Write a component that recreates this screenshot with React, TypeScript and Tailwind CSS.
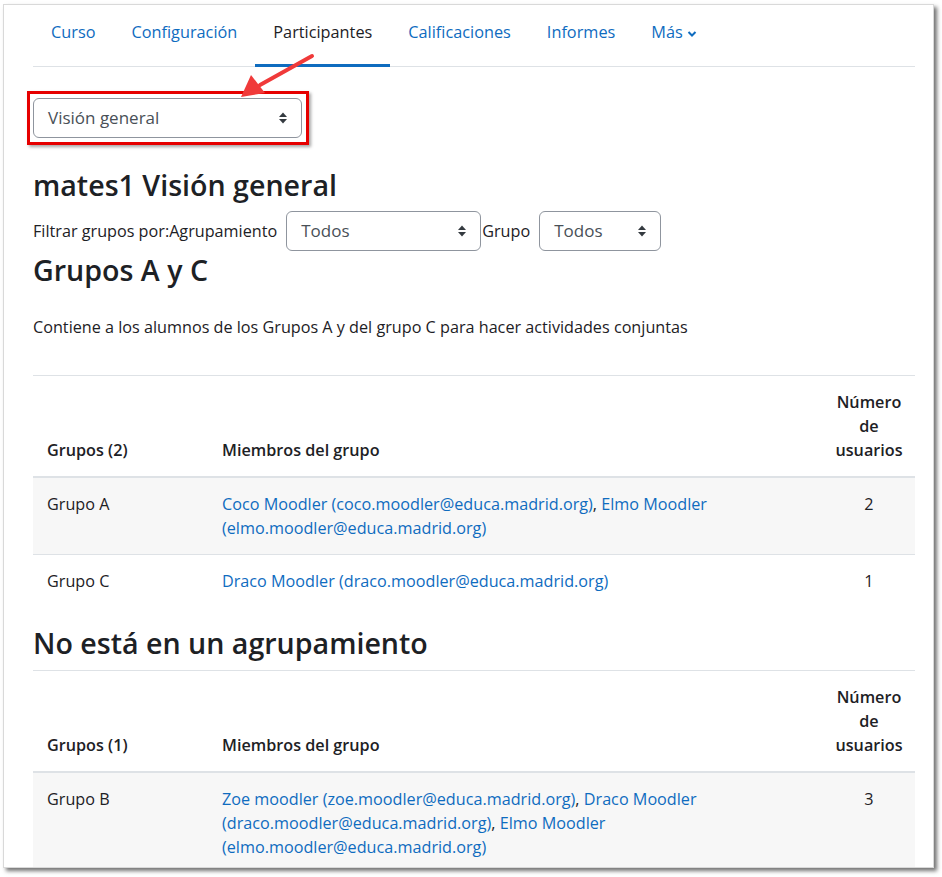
import React from "react";

const font = { fontFamily: '"Open Sans", "Noto Sans", sans-serif' };

function UpDown() {
  return (
    <svg width="10" height="14" viewBox="0 0 10 14" className="shrink-0">
      <path d="M5 1.5 L9 6 L1 6 Z" fill="#343a40" />
      <path d="M5 12.5 L9 8 L1 8 Z" fill="#343a40" />
    </svg>
  );
}

function Select({ label, width }: { label: string; width: string }) {
  return (
    <div
      className={`flex h-[40px] ${width} items-center justify-between rounded-[6px] border border-[#8f959e] bg-white pl-[14px] pr-[13px] text-[17px] text-[#495057]`}
    >
      <span>{label}</span>
      <UpDown />
    </div>
  );
}

type Row = { name: string; members: string[]; count: number };

function GroupTable({ title, rows }: { title: string; rows: Row[] }) {
  return (
    <div className="border-t border-[#dee2e6] text-[16.2px] leading-[24px] text-[#1d2125]">
      <div className="flex items-end border-b-2 border-[#dee2e6] font-semibold">
        <div className="w-[175px] px-[14px] pt-[14px] pb-[14px]">{title}</div>
        <div className="flex-1 px-[14px] pb-[14px]">Miembros del grupo</div>
        <div className="w-[92px] px-[10px] pt-[14px] pb-[14px] text-center">
          Número de usuarios
        </div>
      </div>
      {rows.map((r, i) => (
        <div
          key={r.name}
          className={`flex ${i % 2 === 0 ? "bg-[#f7f7f7] border-b border-[#dee2e6]" : ""}`}
        >
          <div className="w-[175px] px-[14px] py-[14px]">{r.name}</div>
          <div className="flex-1 px-[14px] py-[14px] pr-[100px] text-[#0f6cbf]">
            {r.members.map((m, j) => (
              <React.Fragment key={j}>
                {m}
                {j < r.members.length - 1 ? <span className="text-[#1d2125]">, </span> : null}
              </React.Fragment>
            ))}
          </div>
          <div className="w-[92px] px-[10px] py-[14px] text-center">{r.count}</div>
        </div>
      ))}
    </div>
  );
}

export default function App() {
  const nav = ["Curso", "Configuración", "Participantes", "Calificaciones", "Informes"];
  return (
    <div className="min-h-[877px] w-[942px] bg-white pl-[3px] pt-[4px]" style={font}>
      <div className="relative h-[864px] w-[931px] overflow-hidden border border-[#d9d9d9] bg-white pl-[29px] pr-[18px] shadow-[3px_3px_4px_rgba(0,0,0,0.55)]">
        {/* tabs */}
        <div className="flex border-b border-[#dee2e6] text-[16.3px] leading-[24px]">
          {nav.map((n) => (
            <div
              key={n}
              className={`-mb-px px-[18px] pt-[15px] pb-[20px] border-b-[3px] ${
                n === "Participantes"
                  ? "border-[#0f6cbf] text-[#1d2125]"
                  : "border-transparent text-[#0f6cbf]"
              }`}
            >
              {n}
            </div>
          ))}
          <div className="-mb-px flex items-start gap-[4px] border-b-[3px] border-transparent px-[18px] pt-[15px] pb-[20px] text-[#0f6cbf]">
            Más
            <svg width="10" height="10" viewBox="0 0 10 10" className="mt-[9px]">
              <path d="M1.5 3 L5 6.5 L8.5 3" stroke="#0f6cbf" strokeWidth="2" fill="none" />
            </svg>
          </div>
        </div>

        {/* view selector */}
        <div className="relative mt-[31px] w-[269px]">
          <Select label="Visión general" width="w-[269px]" />
          <div className="pointer-events-none absolute -left-[6px] -top-[7px] h-[54px] w-[282px] border-[3px] border-[#e60000] shadow-[2px_2px_3px_rgba(0,0,0,0.35)]" />
        </div>
        <svg
          className="pointer-events-none absolute left-[230px] top-[45px]"
          width="90"
          height="60"
          viewBox="0 0 90 60"
        >
          <line x1="78" y1="6" x2="26" y2="35" stroke="#f03a3a" strokeWidth="4" strokeLinecap="round" />
          <path d="M7 47 L17 25 L31 43 Z" fill="#f03a3a" />
        </svg>

        <h2 className="mt-[30px] text-[28.6px] leading-[34px] font-semibold text-[#1d2125]">
          mates1 Visión general
        </h2>

        <div className="mt-[9px] flex items-center text-[16.2px] text-[#1d2125]">
          <span className="mr-[9px]">Filtrar grupos por:Agrupamiento</span>
          <Select label="Todos" width="w-[195px]" />
          <span className="mx-[1px]">Grupo</span>
          <div className="ml-[8px]">
            <Select label="Todos" width="w-[122px]" />
          </div>
        </div>

        <h2 className="mt-[2px] text-[28.6px] leading-[34px] font-semibold text-[#1d2125]">
          Grupos A y C
        </h2>
        <p className="mt-[28px] text-[16.2px] leading-[24px] text-[#1d2125]">
          Contiene a los alumnos de los Grupos A y del grupo C para hacer actividades conjuntas
        </p>

        <div className="mt-[36px]">
          <GroupTable
            title="Grupos (2)"
            rows={[
              {
                name: "Grupo A",
                members: [
                  "Coco Moodler (coco.moodler@educa.madrid.org)",
                  "Elmo Moodler (elmo.moodler@educa.madrid.org)",
                ],
                count: 2,
              },
              {
                name: "Grupo C",
                members: ["Draco Moodler (draco.moodler@educa.madrid.org)"],
                count: 1,
              },
            ]}
          />
        </div>

        <h2 className="mt-[19px] text-[28.6px] leading-[34px] font-semibold text-[#1d2125]">
          No está en un agrupamiento
        </h2>
        <div className="mt-[10px]">
          <GroupTable
            title="Grupos (1)"
            rows={[
              {
                name: "Grupo B",
                members: [
                  "Zoe moodler (zoe.moodler@educa.madrid.org)",
                  "Draco Moodler (draco.moodler@educa.madrid.org)",
                  "Elmo Moodler (elmo.moodler@educa.madrid.org)",
                ],
                count: 3,
              },
            ]}
          />
        </div>
      </div>
    </div>
  );
}
